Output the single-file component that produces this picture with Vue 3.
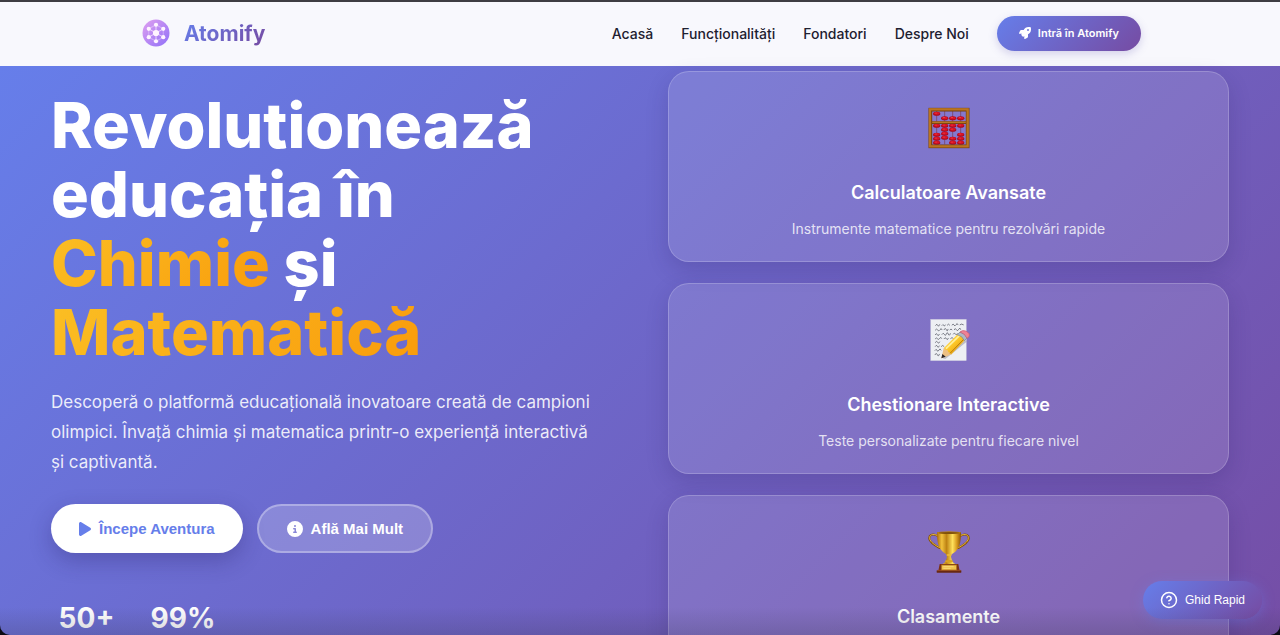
<template>
  <div class="page">
    <header class="navbar">
      <div class="nav-container">
        <a href="#" class="brand">
          <svg class="brand-logo" viewBox="0 0 54 54" aria-hidden="true">
            <defs>
              <linearGradient id="logoFill" x1="0" y1="0" x2="1" y2="1">
                <stop offset="0" stop-color="#e0a0f0" />
                <stop offset="1" stop-color="#9070f8" />
              </linearGradient>
            </defs>
            <circle cx="27" cy="27" r="26" fill="url(#logoFill)" />
            <g stroke="#f6e6ff" stroke-width="2" fill="none">
              <path d="M27 11 41 19V35L27 43 13 35V19Z" stroke-opacity="0.4" />
              <path d="M27 11V43M41 19 13 35M41 35 13 19" stroke-opacity="0.8" />
            </g>
            <g fill="#fff4ff">
              <circle cx="27" cy="27" r="6" />
              <circle v-for="p in atoms" :key="p.join()" :cx="p[0]" :cy="p[1]" r="4" />
            </g>
          </svg>
          <span class="brand-name">Atomify</span>
        </a>
        <nav class="nav-menu">
          <a v-for="link in links" :key="link.href" :href="link.href" class="nav-link">{{ link.label }}</a>
          <button type="button" class="btn-login">
            <svg viewBox="0 0 512 512" aria-hidden="true">
              <path
                d="M505.12 19.09c-1.19-5.53-6.66-11-12.21-12.18C460.72 0 435.51 0 410.41 0 307.18 0 245.27 55.2 199.05 128H94.84c-16.35 0-35.56 11.88-42.89 26.48L2.52 253.3A28.4 28.4 0 0 0 0 264a24 24 0 0 0 24 24h103.82l-22.48 22.47c-11.36 11.36-13 32.26 0 45.25l50.9 50.9c11.16 11.2 32.16 13.16 45.28 0L224 384.16V488a24 24 0 0 0 24 24 28.56 28.56 0 0 0 10.7-2.52l98.74-49.39c14.63-7.3 26.5-26.5 26.5-42.86V312.8c72.6-46.32 128.04-108.41 128.04-211.1.1-25.2.1-50.4-6.86-82.6ZM384.04 168A40 40 0 1 1 424.05 128 40 40 0 0 1 384.04 168Z"
              />
            </svg>
            Intră în Atomify
          </button>
        </nav>
      </div>
    </header>

    <main class="hero">
      <section class="hero-content">
        <h1 class="hero-title">
          Revolutionează educația în <span class="highlight">Chimie</span> și
          <span class="highlight">Matematică</span>
        </h1>
        <p class="hero-text">
          Descoperă o platformă educațională inovatoare creată de campioni
          olimpici. Învață chimia și matematica printr-o experiență interactivă
          și captivantă.
        </p>
        <div class="hero-actions">
          <button type="button" class="btn btn-primary">
            <svg class="icon-play" viewBox="0 0 384 512" aria-hidden="true">
              <path d="M73 39c-14.8-9.1-33.4-9.4-48.5-.9S0 62.6 0 80V432c0 17.4 9.4 33.4 24.5 41.9s33.7 8.1 48.5-.9L361 297c14.3-8.7 23-24.2 23-41s-8.7-32.2-23-41L73 39z" />
            </svg>
            Începe Aventura
          </button>
          <button type="button" class="btn btn-secondary">
            <svg class="icon-info" viewBox="0 0 512 512" aria-hidden="true">
              <path d="M256 512A256 256 0 1 0 256 0a256 256 0 1 0 0 512zM216 336h24V272H216c-13.3 0-24-10.7-24-24s10.7-24 24-24h48c13.3 0 24 10.7 24 24v88h8c13.3 0 24 10.7 24 24s-10.7 24-24 24H216c-13.3 0-24-10.7-24-24s10.7-24 24-24zm40-208a32 32 0 1 1 0 64 32 32 0 1 1 0-64z" />
            </svg>
            Află Mai Mult
          </button>
        </div>
        <div class="hero-stats">
          <span v-for="stat in stats" :key="stat" class="stat">{{ stat }}</span>
        </div>
      </section>

      <section class="cards">
        <article v-for="card in cards" :key="card.icon" class="card">
          <div class="card-icon">
            <svg v-if="card.icon === 'abacus'" viewBox="0 0 126 126" aria-hidden="true">
              <path d="M13 14V112H113V14Z" fill="#8b7ad0" fill-opacity="0.5" />
              <path v-for="x in rods" :key="x" :d="`M${x} 12V112`" stroke="#7a3a50" stroke-width="2" />
              <g v-for="bead in beads" :key="bead.join()">
                <ellipse :cx="bead[0]" :cy="bead[1]" rx="11" ry="6" fill="#a80c20" />
                <ellipse :cx="bead[0]" :cy="bead[1] - 1" rx="9" ry="4" fill="#dc1226" />
                <ellipse :cx="bead[0] - 2" :cy="bead[1] - 2" rx="3" ry="1" fill="#ff6a60" />
              </g>
              <path d="M9 47H117" stroke="#6b3408" stroke-width="8" />
              <path d="M9 46H117" stroke="#b97824" stroke-width="5" />
              <rect x="7" y="8" width="112" height="110" fill="none" stroke="#74400f" stroke-width="11" />
              <rect x="6" y="7" width="113" height="111" fill="none" stroke="#b97420" stroke-width="7" />
            </svg>

            <svg v-else-if="card.icon === 'memo'" viewBox="0 0 126 126" aria-hidden="true">
              <defs>
                <linearGradient id="pencilBody" x1="0" y1="0" x2="1" y2="1">
                  <stop offset="0" stop-color="#ffe768" />
                  <stop offset="0.5" stop-color="#fcc425" />
                  <stop offset="1" stop-color="#c98208" />
                </linearGradient>
              </defs>
              <rect x="8" y="1" width="107" height="124" fill="#edeff3" stroke="#c9c8d8" />
              <g fill="none" stroke="#3f424e" stroke-width="2" stroke-linecap="round">
                <path d="M23 19q4-7 6 0t6-2M42 19q3-5 5 0t5-1M58 18q4-6 7 0M72 18q4-6 6 0t6-1 6 0M96 17q4-4 10 0" />
                <path d="M22 33q4-6 7 0t7-1 6 0M48 32q4-8 7 0t5-1M66 32q3-5 6 0M79 32q3-7 6 0t7-1 6 0" />
                <path d="M22 47q4-7 6 0t6-1M42 46q4-7 7 0t6-1 6 0 6-1M76 45q3-6 6 0t6-1" />
                <path d="M22 59q3-5 6 0t7-1 6 0M48 59q3-6 7 0t6-1M68 58q4-5 8 0" />
                <path d="M22 70q4-6 7 0t6-1M22 82q4-7 6 0t6-1M40 82q4-6 8 0" />
                <path d="M21 94q3-6 6 0t6-1 6 0M21 107q4-8 7 0t6-1" />
              </g>
              <path d="M44 118 112 62 116 68 52 120Z" fill="#8f8b98" fill-opacity="0.5" />
              <path d="M40 118 47 88 60 80 74 91 67 107Z" fill="#edc083" />
              <path d="M40 118 43 105 53 113Z" fill="#2b2528" />
              <path d="M47 88 89 46Q104 48 110 64L69 107Q66 99 61 100 61 91 53 93 53 88 47 88Z" fill="url(#pencilBody)" />
              <path d="M54 89 95 49" stroke="#fff09a" stroke-width="5" />
              <path d="M66 103 106 62" stroke="#bd7b09" stroke-width="3" />
              <path d="M88 47 96 39Q112 43 117 57L109 65Q104 51 88 47Z" fill="#aeb8c8" stroke="#74808f" stroke-width="2" />
              <path d="M96 39Q104 32 113 36 128 43 123 53L117 58Q112 44 96 39Z" fill="#ee8195" stroke="#ca5970" stroke-width="2" />
            </svg>

            <svg v-else viewBox="0 0 126 126" aria-hidden="true">
              <defs>
                <linearGradient id="cupGold">
                  <stop offset="0" stop-color="#a96a0a" />
                  <stop offset="0.2" stop-color="#f1c23d" />
                  <stop offset="0.4" stop-color="#bd8213" />
                  <stop offset="0.65" stop-color="#ffe15b" />
                  <stop offset="0.82" stop-color="#d99d20" />
                  <stop offset="1" stop-color="#885006" />
                </linearGradient>
              </defs>
              <g fill="none" stroke-linecap="round">
                <path d="M29 15C13 5 2 13 4 24S20 43 35 51M97 15C113 5 124 13 122 24S106 43 91 51" stroke="#865207" stroke-width="6" />
                <path d="M29 14C13 5 3 13 5 23S20 42 35 50M97 14C113 5 123 13 121 23S106 42 91 50" stroke="#e4b43c" stroke-width="3" />
              </g>
              <path d="M27 4H99C99 33 95 55 78 65 70 69 69 73 69 78L73 92 81 98V104H45V98L53 92 57 78C57 72 54 68 48 65 31 54 27 33 27 4Z" fill="url(#cupGold)" />
              <ellipse cx="63" cy="5" rx="36" ry="4" fill="#b57d17" />
              <ellipse cx="63" cy="6" rx="31" ry="2" fill="#6f4307" />
              <ellipse cx="63" cy="72" rx="8" ry="3" fill="#e9b937" />
              <ellipse cx="63" cy="91" rx="12" ry="4" fill="#dba321" />
              <path d="M35 99H91L95 120H31Z" fill="#7c3215" />
              <rect x="26" y="118" width="74" height="7" rx="1" fill="#682812" />
              <path d="M28 118H98" stroke="#b15b29" stroke-width="2" />
              <rect x="40" y="102" width="46" height="15" fill="#efc14b" stroke="#a66a1c" stroke-width="2" />
              <path d="M46 107H77M46 112H68" stroke="#ffe68e" stroke-width="2" />
            </svg>
          </div>
          <h3>{{ card.title }}</h3>
          <p>{{ card.text }}</p>
        </article>
      </section>
    </main>

    <button type="button" class="guide-btn">
      <svg viewBox="0 0 24 24" aria-hidden="true">
        <circle cx="12" cy="12" r="10" />
        <path d="M9.09 9a3 3 0 0 1 5.83 1c0 2-3 3-3 3M12 17h.01" />
      </svg>
      Ghid Rapid
    </button>
  </div>
</template>

<script setup>
import { ref } from "vue";

const links = ref([
  { label: "Acasă", href: "#acasa" },
  { label: "Funcționalități", href: "#functionalitati" },
  { label: "Fondatori", href: "#fondatori" },
  { label: "Despre Noi", href: "#despre" },
]);

const stats = ref(["50+", "99%"]);

const cards = ref([
  {
    icon: "abacus",
    title: "Calculatoare Avansate",
    text: "Instrumente matematice pentru rezolvări rapide",
  },
  {
    icon: "memo",
    title: "Chestionare Interactive",
    text: "Teste personalizate pentru fiecare nivel",
  },
  {
    icon: "trophy",
    title: "Clasamente",
    text: "",
  },
]);

const atoms = [[27, 11], [41, 19], [41, 35], [27, 43], [13, 35], [13, 19]];

const rods = [26, 50, 74, 98];
const beads = [
  [26, 20], [50, 34], [74, 34], [98, 34],
  [26, 56], [26, 83], [26, 95], [26, 107],
  [50, 56], [50, 68], [50, 80], [50, 92],
  [74, 56], [74, 68], [74, 95], [74, 107],
  [98, 56], [98, 83], [98, 95], [98, 107],
];
</script>

<style>
body {
  background: #0b0b14;
}
</style>

<style scoped>
* {
  box-sizing: border-box;
}

.page {
  position: relative;
  height: 100vh;
  overflow: hidden;
  border-radius: 0 0 10px 10px;
  font-family: Inter, sans-serif;
  color: #fff;
}

.page::before {
  content: "";
  position: absolute;
  inset: 0 0 auto;
  height: 2px;
  background: #3f3d43;
}

.page::after {
  content: "";
  position: absolute;
  inset: auto 0 0;
  height: 28px;
  background: linear-gradient(transparent, rgba(50, 50, 70, 0.2));
  pointer-events: none;
}

.navbar {
  padding: 0 139px;
  background: #f8f8fd;
}

.nav-container {
  display: flex;
  align-items: center;
  justify-content: space-between;
  max-width: 1240px;
  height: 66px;
  margin: 0 auto;
}

.brand {
  display: flex;
  align-items: center;
  gap: 14px;
  padding-left: 3px;
  text-decoration: none;
}

.brand-logo {
  width: 28px;
  height: 28px;
}

.brand-name {
  font-size: 21px;
  font-weight: 700;
  background: linear-gradient(135deg, #667eea, #764ba2);
  background-clip: text;
  color: transparent;
}

.nav-menu {
  display: flex;
  align-items: center;
  gap: 28px;
}

.nav-link {
  font-size: 14px;
  font-weight: 500;
  color: #1e2030;
  text-decoration: none;
}

button {
  display: flex;
  align-items: center;
  justify-content: center;
  border: none;
  font-family: "Liberation Sans", Arial, sans-serif;
  cursor: pointer;
}

button svg {
  fill: currentColor;
}

.btn-login {
  gap: 7px;
  height: 35px;
  padding: 0 22px;
  border-radius: 18px;
  background: linear-gradient(135deg, #667eea, #764ba2);
  box-shadow: 0 3px 8px rgba(102, 90, 180, 0.25);
  color: #fff;
  font-family: Inter, sans-serif;
  font-size: 11px;
  font-weight: 600;
}

.btn-login svg {
  width: 12px;
  height: 12px;
}

.hero {
  display: grid;
  grid-template-columns: 1fr 1fr;
  gap: 56px;
  padding: 5px 51px 60px;
  background: linear-gradient(135deg, #667eea, #764ba2);
}

.hero-content {
  padding-top: 20px;
}

.hero-title {
  margin: 0 0 20px;
  font-size: 63px;
  font-weight: 800;
  line-height: 69px;
}

.highlight {
  background: linear-gradient(135deg, #fbbf24, #f99b0b);
  background-clip: text;
  color: transparent;
}

.hero-text {
  max-width: 550px;
  margin: 0 0 27px;
  font-size: 17px;
  line-height: 30px;
  color: rgba(255, 255, 255, 0.88);
}

.hero-actions {
  display: flex;
  gap: 14px;
}

.btn {
  height: 49px;
  padding: 0 28px;
  border-radius: 25px;
  gap: 8px;
  font-size: 15px;
  font-weight: 700;
}

.btn-primary {
  background: #fff;
  box-shadow: 0 8px 22px rgba(40, 30, 100, 0.3);
  color: #667eea;
}

.btn-secondary {
  border: 2px solid rgba(255, 255, 255, 0.3);
  background: rgba(255, 255, 255, 0.2);
  color: #fff;
}

.icon-play {
  width: 12px;
  height: 16px;
}

.icon-info {
  width: 16px;
  height: 16px;
}

.hero-stats {
  display: grid;
  grid-template-columns: 71px 66px;
  gap: 28px;
  margin-top: 42px;
}

.stat {
  font-size: 28px;
  font-weight: 700;
  line-height: 46px;
  text-align: center;
}

.cards {
  display: grid;
  gap: 21px;
}

.card {
  min-height: 191px;
  padding: 21px;
  border: 1px solid rgba(255, 255, 255, 0.2);
  border-radius: 21px;
  background: rgba(255, 255, 255, 0.12);
  box-shadow: 0 8px 22px rgba(40, 30, 100, 0.2);
  text-align: center;
}

.card-icon {
  display: flex;
  align-items: center;
  justify-content: center;
  height: 70px;
  margin-bottom: 16px;
}

.card-icon svg {
  width: 42px;
  height: 42px;
}

.card h3 {
  margin: 0 0 11px;
  font-size: 18px;
  font-weight: 600;
  line-height: 28px;
}

.card p {
  margin: 0;
  font-size: 14px;
  line-height: 22px;
  color: rgba(255, 255, 255, 0.8);
}

.guide-btn {
  position: absolute;
  right: 18px;
  bottom: 16px;
  gap: 7px;
  height: 38px;
  padding: 0 17px;
  border-radius: 19px;
  background: linear-gradient(135deg, #667eea, #764ba2);
  box-shadow: 0 3px 13px rgba(102, 126, 234, 0.4);
  color: #fff;
  font-size: 12px;
}

.guide-btn svg {
  width: 18px;
  height: 18px;
  fill: none;
  stroke: currentColor;
  stroke-width: 2;
  stroke-linecap: round;
  stroke-linejoin: round;
}
</style>
